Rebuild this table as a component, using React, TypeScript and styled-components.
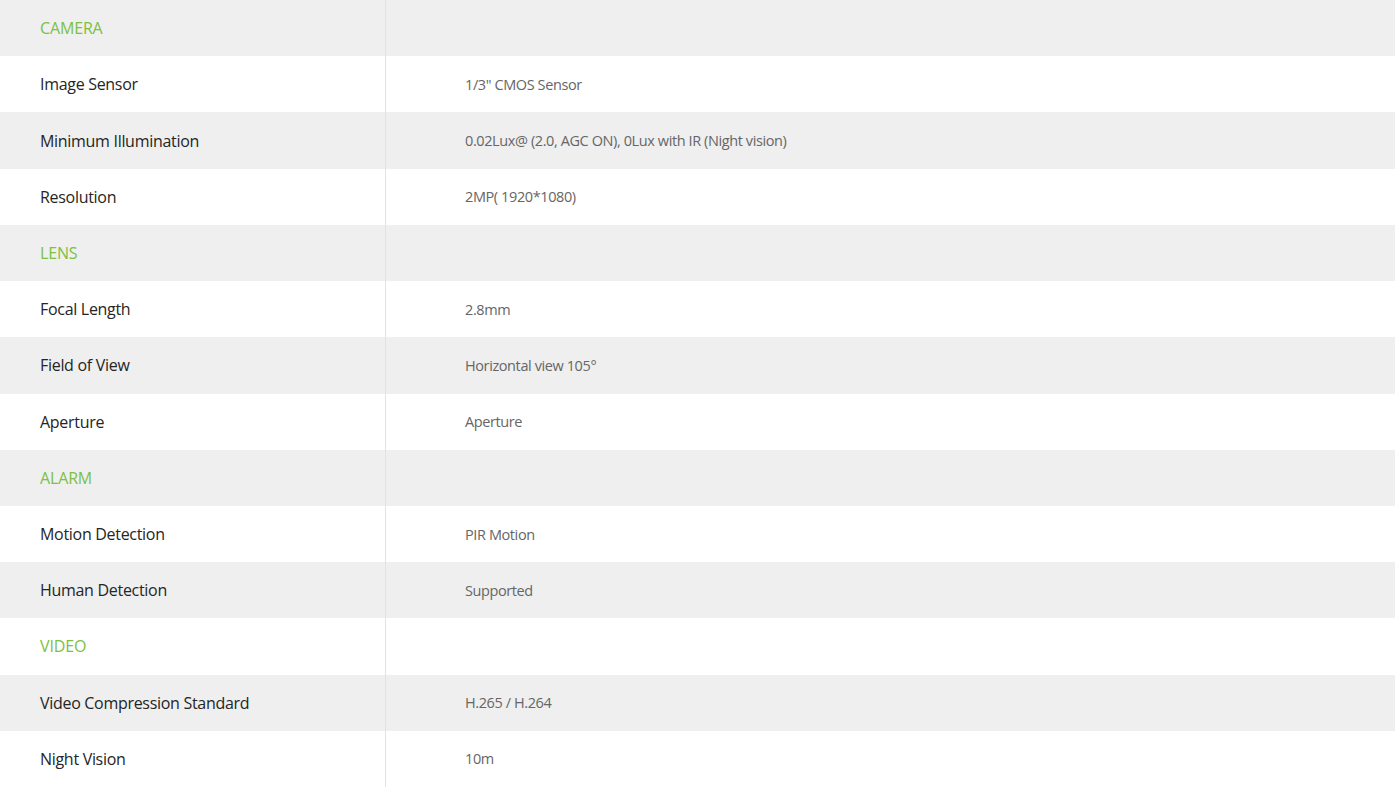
import { FC } from "react";
import styled, { createGlobalStyle } from "styled-components";

interface Spec {
  label: string;
  value?: string;
  section?: boolean;
}

const specs: Spec[] = [
  { label: "CAMERA", section: true },
  { label: "Image Sensor", value: "1/3\" CMOS Sensor" },
  { label: "Minimum Illumination", value: "0.02Lux@ (2.0, AGC ON), 0Lux with IR (Night vision)" },
  { label: "Resolution", value: "2MP( 1920*1080)" },
  { label: "LENS", section: true },
  { label: "Focal Length", value: "2.8mm" },
  { label: "Field of View", value: "Horizontal view 105°" },
  { label: "Aperture", value: "Aperture" },
  { label: "ALARM", section: true },
  { label: "Motion Detection", value: "PIR Motion" },
  { label: "Human Detection", value: "Supported" },
  { label: "VIDEO", section: true },
  { label: "Video Compression Standard", value: "H.265 / H.264" },
  { label: "Night Vision", value: "10m" },
];

const GlobalStyle = createGlobalStyle`
  html, body {
    margin: 0;
    padding: 0;
    background: #ffffff;
  }
`;

const Table = styled.div`
  width: 1395px;
  height: 787px;
  display: grid;
  grid-template-rows: repeat(14, 1fr);
  font-family: "Open Sans", "Noto Sans", sans-serif;
`;

const Row = styled.div<{ $shaded: boolean }>`
  display: grid;
  grid-template-columns: 386px 1fr;
  background-color: ${(p) => (p.$shaded ? "#efefef" : "#ffffff")};
`;

const Label = styled.div<{ $section?: boolean }>`
  display: flex;
  align-items: center;
  padding-left: 40px;
  border-right: 1px solid #e2e2e2;
  font-size: 16px;
  color: ${(p) => (p.$section ? "#7cc142" : "#252525")};
  letter-spacing: ${(p) => (p.$section ? "-0.15px" : "-0.3px")};
`;

const Value = styled.div`
  display: flex;
  align-items: center;
  padding-left: 79px;
  font-size: 14.5px;
  color: #666666;
  letter-spacing: -0.4px;
`;

const App: FC = () => {
  return (
    <>
      <GlobalStyle />
      <Table>
        {specs.map((s, i) => (
          <Row key={s.label} $shaded={i % 2 === 0}>
            <Label $section={s.section}>{s.label}</Label>
            <Value>{s.value}</Value>
          </Row>
        ))}
      </Table>
    </>
  );
};

export default App;
